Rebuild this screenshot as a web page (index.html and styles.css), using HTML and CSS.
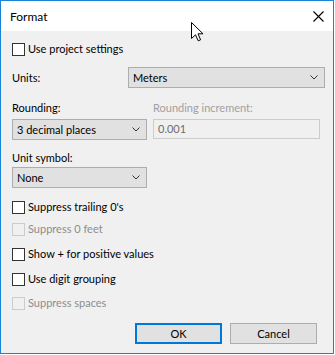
FILE: index.html
```html
<!DOCTYPE html>
<html lang="en">
<head>
    <meta charset="UTF-8">
    <title>Format</title>
    <link rel="stylesheet" href="styles.css">
</head>
<body>
    <div class="window">
        <div class="titlebar">
            <span class="title">Format</span>
            <svg class="close" width="11" height="11" viewBox="0 0 11 11">
                <path d="M0.5 0.5 L10.5 10.5 M10.5 0.5 L0.5 10.5" stroke="#000" stroke-width="1.1" fill="none"/>
            </svg>
        </div>
        <div class="content">
            <label class="check first"><span class="box"></span>Use project settings</label>

            <div class="units-row">
                <span class="units-label">Units:</span>
                <div class="combo wide"><span>Meters</span><svg class="chev" width="8" height="5" viewBox="0 0 8 5"><path d="M0.5 0.5 L4 4 L7.5 0.5" stroke="#333" fill="none"/></svg></div>
            </div>

            <div class="rounding">
                <span class="label">Rounding:</span>
                <span class="label disabled">Rounding increment:</span>
                <div class="combo"><span>3 decimal places</span><svg class="chev" width="8" height="5" viewBox="0 0 8 5"><path d="M0.5 0.5 L4 4 L7.5 0.5" stroke="#333" fill="none"/></svg></div>
                <div class="textbox">0.001</div>
            </div>

            <div class="label symbol-label">Unit symbol:</div>
            <div class="combo symbol"><span>None</span><svg class="chev" width="8" height="5" viewBox="0 0 8 5"><path d="M0.5 0.5 L4 4 L7.5 0.5" stroke="#333" fill="none"/></svg></div>

            <label class="check c1"><span class="box"></span>Suppress trailing 0's</label>
            <label class="check c2 disabled"><span class="box"></span>Suppress 0 feet</label>
            <label class="check c3"><span class="box"></span>Show + for positive values</label>
            <label class="check c4"><span class="box"></span>Use digit grouping</label>
            <label class="check c5 disabled"><span class="box"></span>Suppress spaces</label>

            <div class="buttons">
                <button class="btn default">OK</button>
                <button class="btn">Cancel</button>
            </div>
        </div>
        <svg class="cursor" width="13" height="20" viewBox="0 0 13 20">
            <path d="M0.5 0.5 L0.5 16.5 L4.5 12.8 L7.2 18.8 L9.6 17.8 L7 11.8 L12 11.8 Z" fill="#fff" stroke="#000" stroke-width="1" stroke-linejoin="miter"/>
        </svg>
    </div>
</body>
</html>
```

FILE: styles.css
```css
body {
    margin: 0;
    background: #fff;
    font-family: Lato, "Noto Sans", sans-serif;
    font-size: 11px;
    color: #000;
}
.window {
    position: relative;
    width: 332px;
    height: 352px;
    border: 1px solid #1883d7;
    background: #f0f0f0;
    display: flex;
    flex-direction: column;
}
.titlebar {
    height: 30px;
    background: #fff;
    display: flex;
    align-items: center;
    padding-left: 9px;
}
.title {
    font-size: 12px;
}
.close {
    margin-left: auto;
    margin-right: 9px;
}
.content {
    padding-left: 11px;
    display: flex;
    flex-direction: column;
    align-items: flex-start;
}
.check {
    display: flex;
    align-items: center;
    height: 16px;
    line-height: 16px;
    gap: 3px;
}
.box {
    width: 11px;
    height: 11px;
    border: 1px solid #333;
    background: #fff;
}
.check.disabled {
    color: #8d8d8d;
}
.check.disabled .box {
    border-color: #ccc;
    background: #f0f0f0;
}
.first { margin-top: 10px; }
.c1 { margin-top: 11px; }
.c2 { margin-top: 6px; }
.c3 { margin-top: 9px; }
.c4 { margin-top: 9px; }
.c5 { margin-top: 8px; }
.units-row {
    display: flex;
    align-items: center;
    margin-top: 10px;
}
.units-label {
    width: 116px;
}
.combo {
    height: 19px;
    border: 1px solid #adadad;
    background: #e1e1e1;
    display: flex;
    align-items: center;
    justify-content: space-between;
    padding: 0 6px 0 4px;
}
.combo.wide {
    width: 185px;
}
.chev {
    display: block;
}
.rounding {
    margin-top: 12px;
    display: grid;
    grid-template-columns: 135px 167px;
    column-gap: 6px;
    row-gap: 3px;
}
.rounding .combo {
    width: 123px;
}
.label {
    line-height: 16px;
    height: 16px;
}
.label.disabled {
    color: #a0a0a0;
}
.textbox {
    height: 18px;
    border: 1px solid #ccc;
    background: #f0f0f0;
    color: #6d6d6d;
    line-height: 18px;
    padding-left: 4px;
}
.symbol-label {
    margin-top: 10px;
}
.combo.symbol {
    width: 123px;
    margin-top: 1px;
}
.buttons {
    align-self: stretch;
    display: flex;
    justify-content: flex-end;
    gap: 8px;
    margin-top: 12px;
    padding-right: 16px;
}
.btn {
    width: 87px;
    height: 21px;
    border: 1px solid #adadad;
    background: #e1e1e1;
    font-family: inherit;
    font-size: 11px;
    color: #000;
    padding: 0;
}
.btn.default {
    border: 2px solid #0078d7;
}
.cursor {
    position: absolute;
    left: 190px;
    top: 21px;
}
```
